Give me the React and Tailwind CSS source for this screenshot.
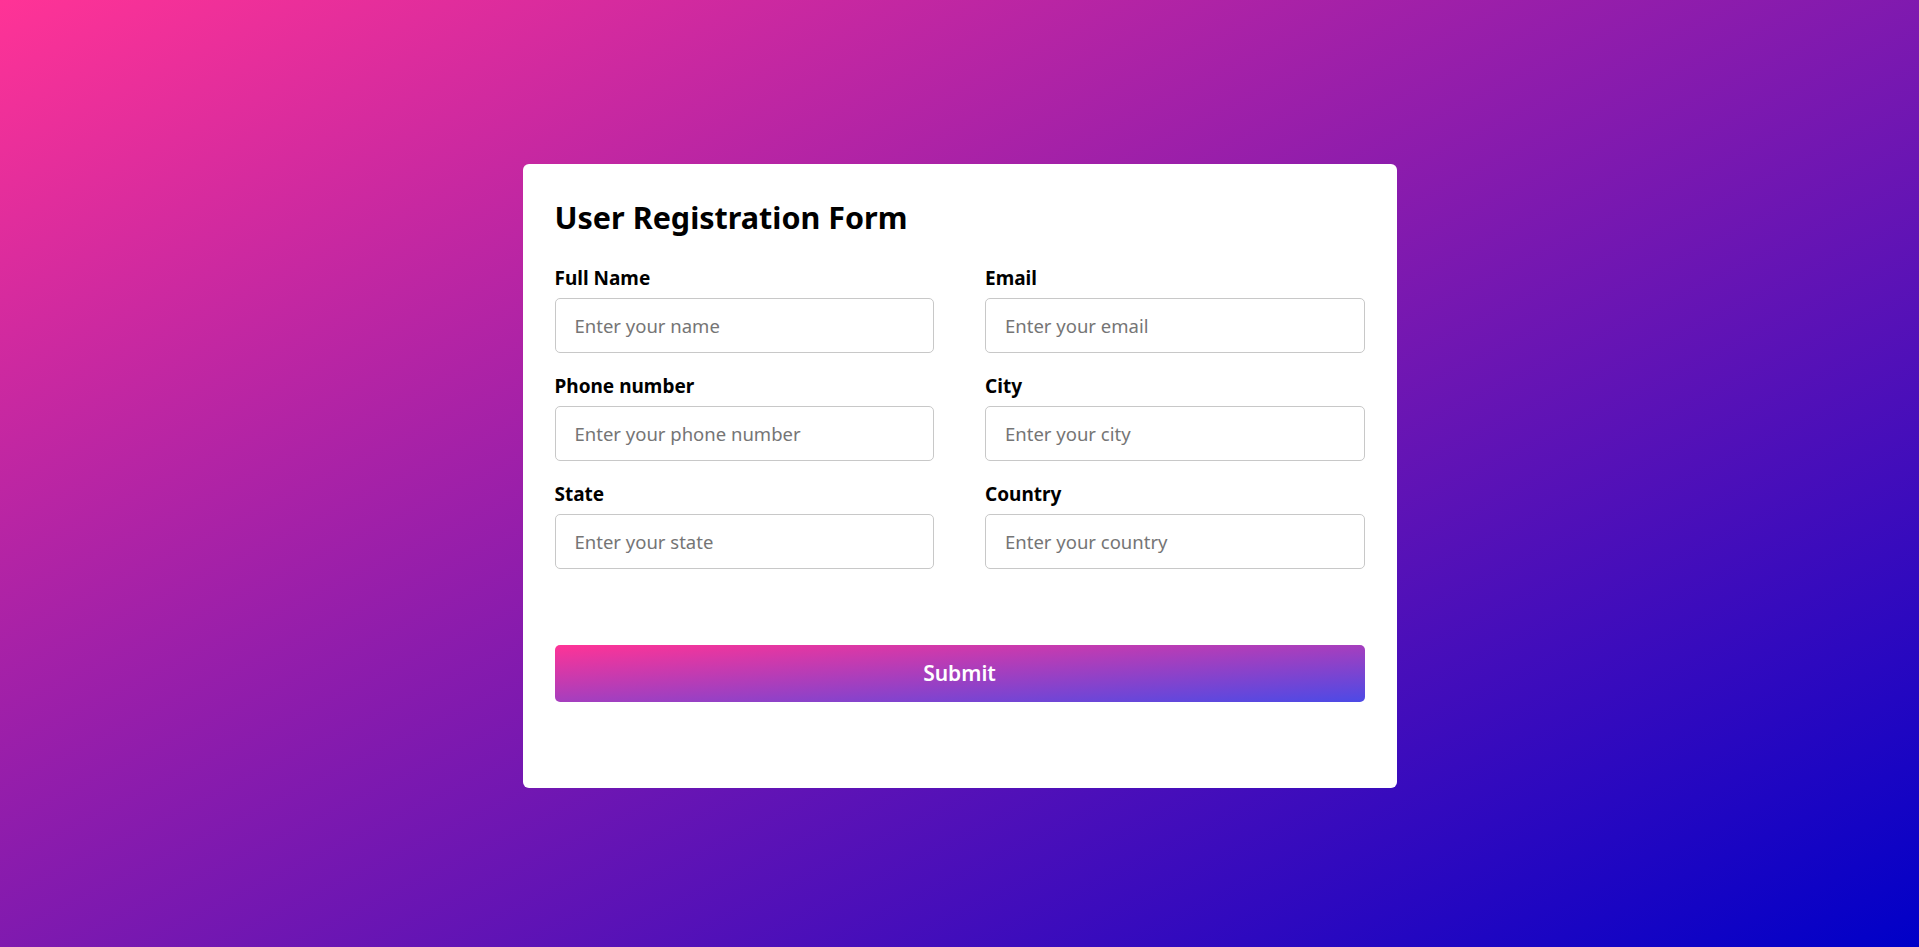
import React, { useState } from "react";

const fields = [
  { name: "fullName", label: "Full Name", placeholder: "Enter your name" },
  { name: "email", label: "Email", placeholder: "Enter your email" },
  { name: "phone", label: "Phone number", placeholder: "Enter your phone number" },
  { name: "city", label: "City", placeholder: "Enter your city" },
  { name: "state", label: "State", placeholder: "Enter your state" },
  { name: "country", label: "Country", placeholder: "Enter your country" },
];

export default function App() {
  const [form, setForm] = useState({});

  const handleChange = (e) => {
    setForm({ ...form, [e.target.name]: e.target.value });
  };

  const handleSubmit = (e) => {
    e.preventDefault();
    console.log("Form data:", form);
  };

  return (
    <div
      className="min-h-screen flex items-center justify-center bg-[linear-gradient(to_bottom_right,#ff3396,#0000c8)]"
      style={{ fontFamily: '"Noto Sans", "Open Sans", sans-serif' }}
    >
      <form
        onSubmit={handleSubmit}
        className="w-[874px] h-[624px] mt-[5px] bg-white rounded-[6px] px-8 pt-[35px]"
      >
        <h1 className="text-[30.5px] leading-[36px] font-bold text-black mb-[31px]">
          User Registration Form
        </h1>

        <div className="grid grid-cols-2 gap-x-[51px] gap-y-[21px]">
          {fields.map((f) => (
            <div key={f.name} className="flex flex-col">
              <label className="text-[19px] leading-[24px] font-bold text-black mb-[8px]">
                {f.label}
              </label>
              <input
                type="text"
                name={f.name}
                placeholder={f.placeholder}
                value={form[f.name] || ""}
                onChange={handleChange}
                className="h-[55px] w-full border border-[#c8c8c8] rounded-[5px] pl-[19px] pr-3 text-[18.5px] text-black placeholder:text-[#757575] outline-none"
              />
            </div>
          ))}
        </div>

        <button
          type="submit"
          className="mt-[76px] w-full h-[57px] rounded-[5px] text-white text-[21px] font-semibold bg-[linear-gradient(to_bottom_right,#ff3396,#4c4ae6)]"
        >
          Submit
        </button>
      </form>
    </div>
  );
}
